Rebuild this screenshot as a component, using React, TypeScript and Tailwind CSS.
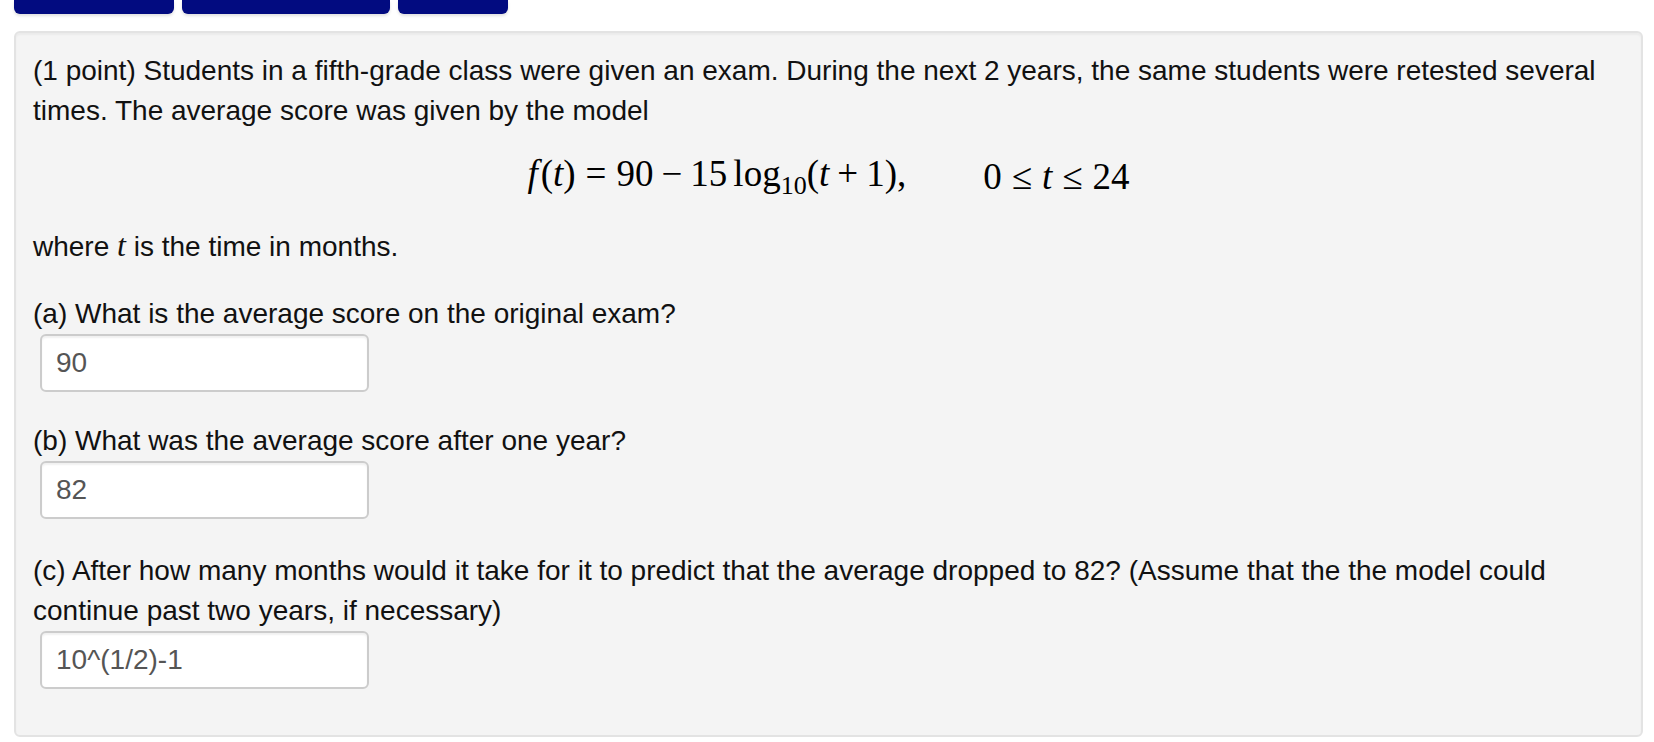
import React from "react";

const sans = "font-['Liberation_Sans',Arial,sans-serif]";
const serif = "font-['Liberation_Serif','Times_New_Roman',serif]";

function AnswerBox({ value }: { value: string }) {
  return (
    <div className="ml-[7px] w-[329px] h-[58px] bg-white border-2 border-[#cccccc] rounded-[6px] flex items-center pl-[14px] text-[28px] text-[#555555] shadow-[inset_0_2px_2px_rgba(0,0,0,0.06)]">
      {value}
    </div>
  );
}

export default function App() {
  return (
    <div className={`w-full min-h-[742px] bg-white ${sans}`}>
      {/* botões do topo, cortados pela borda da janela */}
      <div className="flex gap-[8px] pl-[14px]">
        <div className="w-[160px] h-[14px] bg-[#020b80] rounded-b-[6px] shadow-[0_2px_3px_rgba(0,0,0,0.12)]" />
        <div className="w-[208px] h-[14px] bg-[#020b80] rounded-b-[6px] shadow-[0_2px_3px_rgba(0,0,0,0.12)]" />
        <div className="w-[110px] h-[14px] bg-[#020b80] rounded-b-[6px] shadow-[0_2px_3px_rgba(0,0,0,0.12)]" />
      </div>

      {/* Problema */}
      <div className="ml-[14px] mr-[11px] mt-[17px] bg-[#f4f4f4] border-2 border-[#e3e3e3] rounded-[6px] pl-[17px] pr-[17px] pt-[18px] pb-[46px] text-[28px] leading-[40px] text-[#111111] shadow-[inset_0_2px_2px_rgba(0,0,0,0.04)]">
        <p>
          (1 point) Students in a fifth-grade class were given an exam. During the next 2 years, the same students were
          retested several times. The average score was given by the model
        </p>

        <div className={`h-[94px] pb-[3px] flex items-center justify-center text-[37px] leading-none text-black ${serif}`}>
          <span className="mr-[3px]">
            <i className="pr-[3px]">f</i>(<i>t</i>)<span className="mx-[10px]">=</span>90<span className="mx-[8px]">−</span>15
            <span className="ml-[6px]">log</span>
            <span className="text-[26px] align-[-8px]">10</span>(<i>t</i>
            <span className="mx-[8px]">+</span>1),
          </span>
          <span className="ml-[74px]">
            0<span className="mx-[10px]">≤</span>
            <i>t</i>
            <span className="mx-[10px]">≤</span>24
          </span>
        </div>

        <p>
          where <i className={`${serif} text-[32px]`}>t</i> is the time in months.
        </p>

        <div className="mt-[27px]">
          <p>(a) What is the average score on the original exam?</p>
          <AnswerBox value="90" />
        </div>

        <div className="mt-[29px]">
          <p>(b) What was the average score after one year?</p>
          <AnswerBox value="82" />
        </div>

        <div className="mt-[32px]">
          <p>
            (c) After how many months would it take for it to predict that the average dropped to 82? (Assume that the
            the model could continue past two years, if necessary)
          </p>
          <AnswerBox value="10^(1/2)-1" />
        </div>
      </div>
    </div>
  );
}
